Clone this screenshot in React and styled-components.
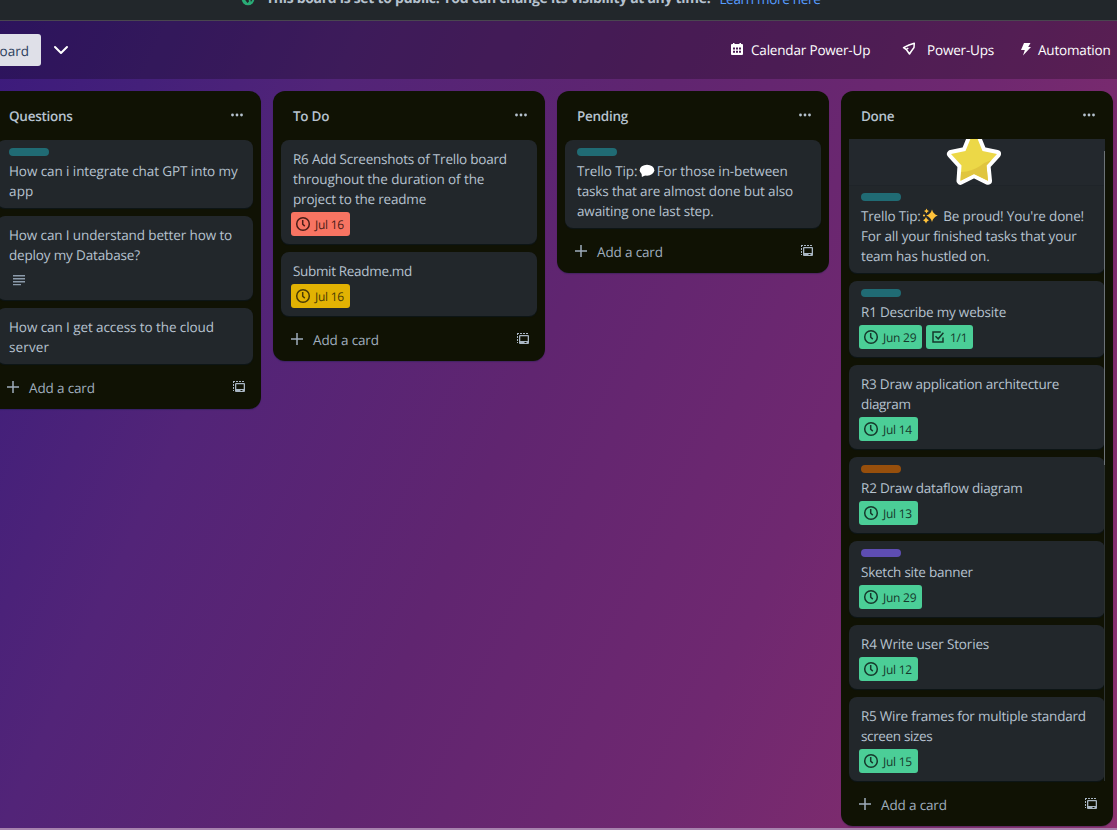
import React from "react";
import styled, { createGlobalStyle } from "styled-components";

const Global = createGlobalStyle`
  * { box-sizing: border-box; }
  body {
    margin: 0; overflow: hidden; font-family: "Open Sans", "Noto Sans", sans-serif;
    font-size: 13.5px; line-height: 20px; color: #b6c2cf; text-rendering: geometricPrecision;
  }
`;

const Page = styled.div`
  width: 1117px; height: 830px; overflow: hidden; display: flex; flex-direction: column;
  background: linear-gradient(114deg, #3b1a7c 0%, #44207a 12%, #522478 25%, #602570 47%, #6f2870 69%, #7c2b6e 82%, #8e3472 100%);
  border-bottom: 2px solid #a783ae;
`;
const Banner = styled.div`
  height: 21px; flex: none; background: #22272b; border-bottom: 1px solid #49464f;
  display: flex; align-items: flex-start; padding-left: 241px; white-space: nowrap;
`;
const BannerText = styled.strong`
  margin: -11px 0 0 11px; font-size: 14px; font-weight: 700; letter-spacing: -0.3px;
`;
const BannerLink = styled.span`
  margin: -11px 0 0 9px; color: #579dff; letter-spacing: -0.3px;
`;
const Globe = styled.svg`margin-top: -8px; flex: none;`;

const BoardBar = styled.div`
  height: 58px; flex: none; background: rgba(0, 0, 0, 0.25);
  display: flex; align-items: center; color: #fff; white-space: nowrap;
`;
const ViewTab = styled.div`
  width: 41px; height: 32px; background: #dfe0e8; color: #2c3e5d; border-radius: 0 3px 3px 0;
  display: flex; align-items: center; justify-content: flex-end; padding: 2px 12px 0 0;
`;
const Chevron = styled.svg`margin-left: 12px; margin-right: auto;`;
const BarItem = styled.div`
  display: flex; align-items: center; gap: ${(p) => p.$gap}px; width: ${(p) => p.$w}px; letter-spacing: -0.18px;
  svg { flex: none; margin-top: -2px; }
`;

const Lists = styled.div`
  display: flex; align-items: flex-start; gap: 12px; margin-left: -11px; padding-top: 12px;
`;
const List = styled.section`
  width: 272px; flex: none; background: #101204; border-radius: 12px; padding: 0 8px;
  box-shadow: 0 1px 1px rgba(9, 30, 66, 0.3);
`;
const ListHead = styled.header`
  height: 48px; display: flex; align-items: center; justify-content: space-between; padding: 2px 8px 0 12px;
`;
const ListTitle = styled.h2`
  margin: 0; font-size: 13.5px; line-height: 20px; font-weight: 600; letter-spacing: -0.28px;
`;
const Cards = styled.div`
  display: flex; flex-direction: column; gap: 8px; position: relative;
  margin-top: ${(p) => (p.$scrolled ? -1 : 0)}px; padding-top: 1px;
`;
const Scrollbar = styled.i`
  position: absolute; right: 0; top: 13px; bottom: 0; width: 1px;
  background: linear-gradient(#6d7378 0 314px, #2d3231 314px);
`;
const Card = styled.article`
  background: #22272b; border-radius: ${(p) => (p.$cut ? "0 0 8px 8px" : "8px")};
  padding: 8px 12px ${(p) => (p.$badged ? 8 : 7)}px; box-shadow: 0 1px 1px rgba(9, 30, 66, 0.35);
  white-space: nowrap;
`;
const Cover = styled.div`
  height: 46px; margin: -8px -12px 8px; background: #23282d; box-shadow: 0 1px 0 #1f2429; overflow: hidden;
  display: flex; justify-content: center;
  svg { flex: none; margin-right: 7px; }
`;
const Label = styled.div`
  width: 40px; height: 8px; border-radius: 4px; background: ${(p) => p.$color}; margin-bottom: 4px;
`;
const Title = styled.div`padding: 1px 0 0;`;
const Line = styled.div`
  height: 20px; letter-spacing: ${(p) => p.$ls}px; display: flex; align-items: center; white-space: pre;
  svg { flex: none; margin: 0 1.5px 0 -1.5px; }
`;
const Badges = styled.div`display: flex; gap: 4px; margin: 3px 0 0 -2px;`;
const Badge = styled.span`
  height: 24px; width: ${(p) => p.$w}px; padding: 1px 0 0 4px; border-radius: 3px; display: flex; align-items: center; gap: 4px;
  background: ${(p) => p.$bg}; color: ${(p) => p.$fg}; font-size: 12px; letter-spacing: -0.25px;
  svg { flex: none; margin-top: -1px; }
`;
const DescBadge = styled.span`height: 24px; padding: 4px 0 0 4px; color: #8c9bab;`;
const Footer = styled.footer`
  height: 45px; display: flex; align-items: center; color: #9fadbc; padding: 3px 6px 0 10px;
  span { margin-left: 10px; flex: 1; letter-spacing: -0.15px; }
`;
const TemplateIcon = styled.svg`margin-top: -2px;`;

const tones = {
  green: ["#4bce97", "#16382c"],
  red: ["#f87462", "#4a1c17"],
  yellow: ["#e2b203", "#493a05"],
};

const Clock = () => (
  <svg width="16" height="16" viewBox="0 0 16 16" fill="none" stroke="currentColor" strokeWidth="1.5">
    <circle cx="8" cy="8" r="6.3" /><path d="M7.7 4v4.2l2.1 1.9" />
  </svg>
);
const Check = () => (
  <svg width="16" height="16" viewBox="0 0 16 16" fill="none" stroke="currentColor" strokeWidth="1.5">
    <path d="M10.8 3H3v10h10V8.5M5.5 7.2l2.7 2.6L13.4 3.8" />
  </svg>
);
const Dots = () => (
  <svg width="16" height="16" viewBox="0 0 16 16" fill="#b6c2cf">
    <circle cx="3.5" cy="7" r="1.4" /><circle cx="8" cy="7" r="1.4" /><circle cx="12.5" cy="7" r="1.4" />
  </svg>
);
const Plus = () => (
  <svg width="12" height="14" viewBox="0 0 12 14" stroke="#9fadbc" strokeWidth="1.5"><path d="M6 0v12M0 6h12" /></svg>
);
const Template = () => (
  <TemplateIcon width="16" height="16" viewBox="0 0 16 16" fill="#a9b6c3">
    <path d="M2 2h2v1H3v1H2zM5 2h2v1H5zM8 2h2v1H8zM11 2h2v1h-2zM2 5h1v2H2zM2 8h1v2H2zM2 11h1v1H2z" />
    <path fillRule="evenodd" d="M5 4h8q1 0 1 1v7q0 1-1 1H5q-1 0-1-1V5q0-1 1-1zM5.300 5.300v4.700h7.400V5.300zM9.500 11v1h2v-1z" />
  </TemplateIcon>
);
const Lines = () => (
  <svg width="16" height="16" viewBox="0 0 16 16" fill="#8c9bab">
    <path d="M2 3h12v1.4H2zM2 6h12v1.4H2zM2 9h12v1.4H2zM2 12h8v1.2H2z" />
  </svg>
);
const Bubble = () => (
  <svg width="16" height="14" viewBox="0 0 16 14" fill="#fff">
    <ellipse cx="8" cy="6.2" rx="7.3" ry="5.500" /><path d="M2.500 9l.4 4L7 11z" />
  </svg>
);
const Sparkles = () => (
  <svg width="16" height="16" viewBox="0 0 16 16" fill="#ffc23a">
    <path d="M10 1.500q1.200 4.700 5.800 6Q11.200 9 10 14 8.800 9 4.200 7.500 8.800 6.200 10 1.500z" />
    <path d="M4.500 .5q.5 2 2.500 2.500Q5 3.500 4.500 5.500 4 3.500 2 3 4 2.500 4.500 .5zM4 9q.6 2.500 3 3.200Q4.600 13 4 15.500 3.400 13 1 12.200 3.400 11.500 4 9z" />
    <circle cx="2" cy="7.500" r="1.100" />
  </svg>
);
const starPath = "M29-9L37.500 12 52 15 41.500 26.500 43 41.800 29 35 15.500 41.800 16.500 26.500 6 15 20.500 12z";
const Star = () => (
  <svg width="58" height="46" viewBox="0 0 58 46">
    <path d={starPath} fill="#fff" stroke="#fff" strokeWidth="8" strokeLinejoin="round" />
    <path d={starPath} fill="#ecd847" />
    <path d="M46.500 21L41.500 26.500 43 41.800 29 35 15.500 41.800 16 33Q27 32.500 35 27 40 23 46.500 21z" fill="#e0c53e" />
  </svg>
);

const glyphs = { bubble: Bubble, spark: Sparkles };
const teal = "#206b74";

const lists = [
  { name: "Questions", cards: [
    { label: teal, lines: [["How can i integrate chat GPT into my", -0.09], ["app", 0.15]] },
    { lines: [["How can I understand better how to", -0.12], ["deploy my Database?", -0.16]], desc: true },
    { lines: [["How can I get access to the cloud", -0.09], ["server", 0.15]] },
  ] },
  { name: "To Do", cards: [
    { lines: [["R6 Add Screenshots of Trello board", -0.22], ["throughout the duration of the", -0.09], ["project to the readme", -0.2]], due: "Jul 16", tone: "red" },
    { lines: [["Submit Readme.md", -0.33]], due: "Jul 16", tone: "yellow" },
  ] },
  { name: "Pending", cards: [
    { label: teal, lines: [["Trello Tip: ", -0.12, "bubble", "For those in-between"], ["tasks that are almost done but also", -0.15], ["awaiting one last step.", -0.15]] },
  ] },
  { name: "Done", scrolled: true, cards: [
    { cover: true, label: teal, lines: [["Trello Tip: ", -0.18, "spark", " Be proud! You're done!"], ["For all your finished tasks that your", -0.15], ["team has hustled on.", -0.18]] },
    { label: teal, lines: [["R1 Describe my website", -0.2]], due: "Jun 29", checks: "1/1" },
    { lines: [["R3 Draw application architecture", -0.23], ["diagram", -0.35]], due: "Jul 14" },
    { label: "#974f0c", lines: [["R2 Draw dataflow diagram", -0.2]], due: "Jul 13" },
    { label: "#5e4db2", lines: [["Sketch site banner", -0.25]], due: "Jun 29" },
    { lines: [["R4 Write user Stories", -0.16]], due: "Jul 12" },
    { lines: [["R5 Wire frames for multiple standard", -0.23], ["screen sizes", -0.35]], due: "Jul 15" },
  ] },
];

function CardView({ card }) {
  const [bg, fg] = tones[card.tone || "green"];
  return (
    <Card $cut={card.cover} $badged={card.due || card.desc}>
      {card.cover && <Cover><Star /></Cover>}
      {card.label && <Label $color={card.label} />}
      <Title>
        {card.lines.map(([text, ls, glyph, rest]) => {
          const Glyph = glyphs[glyph];
          return <Line key={text} $ls={ls}><span>{text}</span>{Glyph && <Glyph />}{rest && <span>{rest}</span>}</Line>;
        })}
      </Title>
      {(card.due || card.desc) && (
        <Badges>
          {card.desc && <DescBadge><Lines /></DescBadge>}
          {card.due && <Badge $bg={bg} $fg={fg} $w={card.due.startsWith("Jun") ? 63 : 59}><Clock />{card.due}</Badge>}
          {card.checks && <Badge $bg={bg} $fg={fg} $w={47}><Check />{card.checks}</Badge>}
        </Badges>
      )}
    </Card>
  );
}

export default function App() {
  return (
    <Page>
      <Global />
      <Banner>
        <Globe width="14" height="14" viewBox="0 0 14 14"><circle cx="7" cy="7" r="6.3" fill="#2aab76" /><path d="M4 5l3.500 2 .5 2.500-1.500 1.500-2-2.500zM9 6.500l2.500 1L10 10z" fill="#22272b" /></Globe>
        <BannerText>This board is set to public. You can change its visibility at any time.</BannerText>
        <BannerLink>Learn more here</BannerLink>
      </Banner>
      <BoardBar>
        <ViewTab>Board</ViewTab>
        <Chevron width="16" height="16" viewBox="0 0 16 16" fill="none" stroke="#fff" strokeWidth="2" strokeLinecap="round" strokeLinejoin="round"><path d="M2 5l6 6 6-6" /></Chevron>
        <BarItem $gap={7} $w={172}>
          <svg width="14" height="14" viewBox="0 0 14 14" fill="#fff"><path fillRule="evenodd" d="M2 2h1V1h1.500v1h5V1H11v1h1q1 0 1 1v9q0 1-1 1H2q-1 0-1-1V3q0-1 1-1zM3 5.500v2h2v-2zM6 5.500v2h2v-2zM9 5.500v2h2v-2zM3 8.700v2h2v-2zM6 8.700v2h2v-2zM9 8.700v2h2v-2z" /></svg>
          Calendar Power-Up
        </BarItem>
        <BarItem $gap={11} $w={118}>
          <svg width="14" height="14" viewBox="0 0 14 14" fill="none" stroke="#fff" strokeWidth="1.5" strokeLinejoin="round"><path d="M12.300 1.200L7 3 1.500 5.700l2.800 1.800L7.500 12l1.600-2.500L12 5.500zM4.300 7.500l2-1.500" /></svg>
          Power-Ups
        </BarItem>
        <BarItem $gap={6} $w={97}>
          <svg width="12" height="14" viewBox="0 0 12 14" fill="#fff"><path d="M4 1h6.500L8.200 5H11L3 13.500 4.800 8H1z" /></svg>
          Automation
        </BarItem>
      </BoardBar>
      <Lists>
        {lists.map((list) => (
          <List key={list.name}>
            <ListHead><ListTitle>{list.name}</ListTitle><Dots /></ListHead>
            <Cards $scrolled={list.scrolled}>
              {list.cards.map((card) => <CardView key={card.lines[0][0] + card.due} card={card} />)}
              {list.scrolled && <Scrollbar />}
            </Cards>
            <Footer><Plus /><span>Add a card</span><Template /></Footer>
          </List>
        ))}
      </Lists>
    </Page>
  );
}
